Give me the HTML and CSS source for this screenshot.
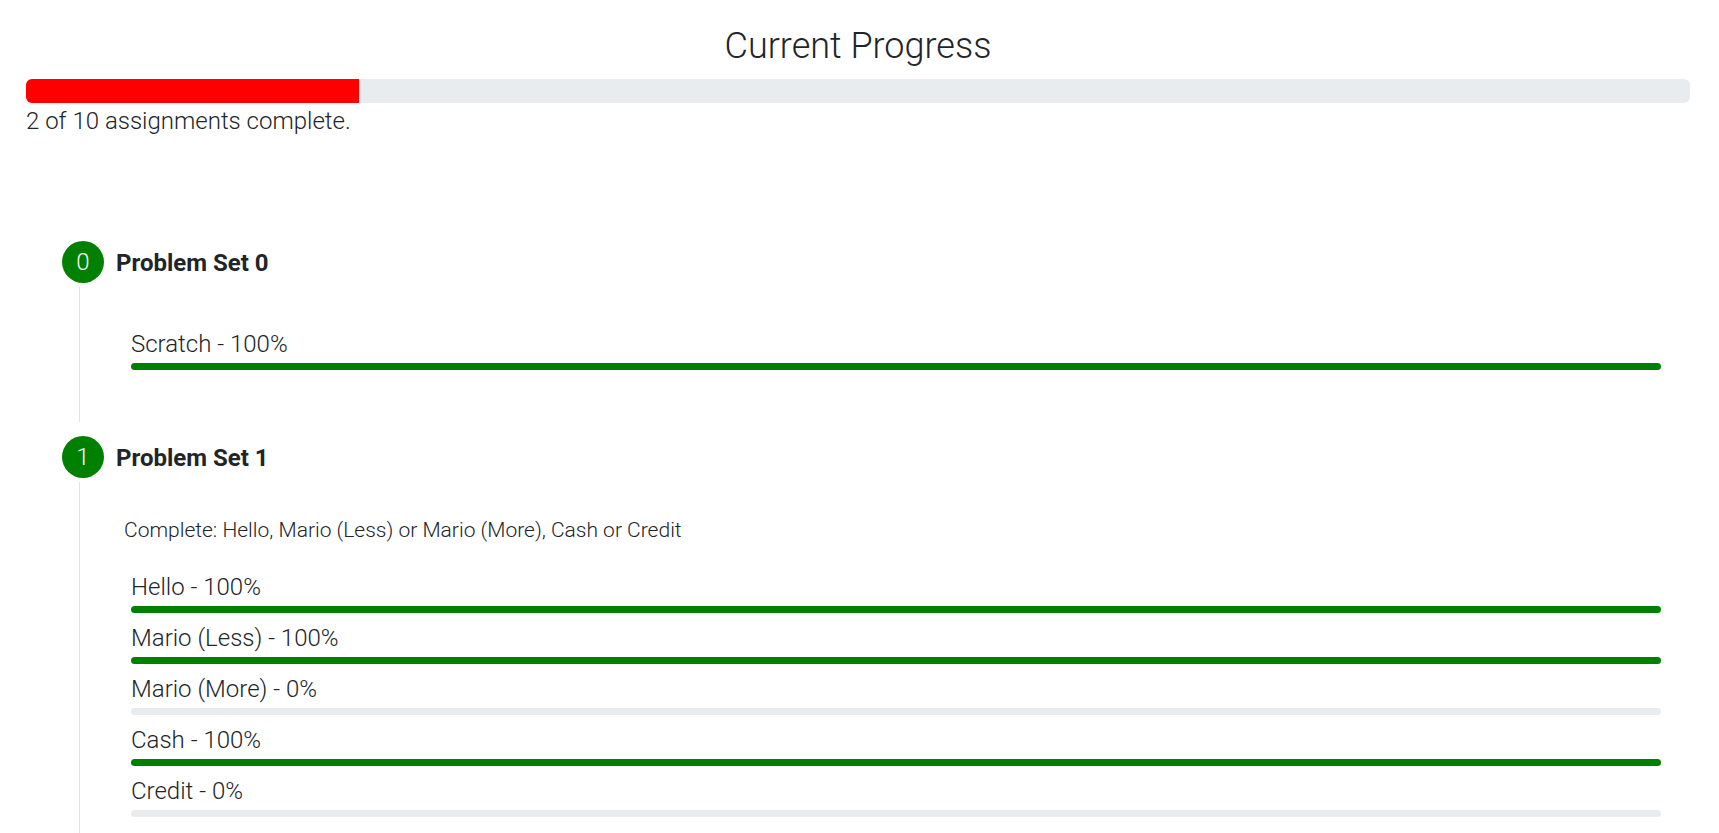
FILE: index.html
```html
<!DOCTYPE html>
<html lang="en">
<head>
<meta charset="utf-8">
<title>Current Progress</title>
<link rel="stylesheet" href="styles.css">
</head>
<body>
<main class="page">
  <h1 class="title">Current Progress</h1>
  <div class="overall">
    <div class="overall-fill" style="width: 20%"></div>
  </div>
  <p class="overall-text">2 of 10 assignments complete.</p>

  <section class="sets">
    <div class="set">
      <div class="set-head">
        <span class="badge">0</span>
        <h2 class="set-title">Problem Set 0</h2>
      </div>
      <div class="set-body">
        <div class="items">
          <div class="item">
            <div class="item-label">Scratch - 100%</div>
            <div class="item-bar"><div class="item-fill" style="width: 100%"></div></div>
          </div>
        </div>
      </div>
    </div>

    <div class="set">
      <div class="set-head">
        <span class="badge">1</span>
        <h2 class="set-title">Problem Set 1</h2>
      </div>
      <div class="set-body">
        <p class="set-note">Complete: Hello, Mario (Less) or Mario (More), Cash or Credit</p>
        <div class="items">
          <div class="item">
            <div class="item-label">Hello - 100%</div>
            <div class="item-bar"><div class="item-fill" style="width: 100%"></div></div>
          </div>
          <div class="item">
            <div class="item-label">Mario (Less) - 100%</div>
            <div class="item-bar"><div class="item-fill" style="width: 100%"></div></div>
          </div>
          <div class="item">
            <div class="item-label">Mario (More) - 0%</div>
            <div class="item-bar"><div class="item-fill" style="width: 0%"></div></div>
          </div>
          <div class="item">
            <div class="item-label">Cash - 100%</div>
            <div class="item-bar"><div class="item-fill" style="width: 100%"></div></div>
          </div>
          <div class="item">
            <div class="item-label">Credit - 0%</div>
            <div class="item-bar"><div class="item-fill" style="width: 0%"></div></div>
          </div>
        </div>
      </div>
    </div>
  </section>
</main>
</body>
</html>
```

FILE: styles.css
```css
html {
  overflow: hidden;
}

body {
  margin: 0;
  background: #ffffff;
  color: #212529;
  font-family: Roboto, "Liberation Sans", sans-serif;
  font-weight: 300;
}

.page {
  padding: 0 29px 0 26px;
}

.title {
  margin: 25px 0 0;
  font-size: 36px;
  line-height: 42px;
  font-weight: 300;
  text-align: center;
}

.overall {
  margin-top: 12px;
  height: 24px;
  background: #e9ecef;
  border-radius: 6px;
  overflow: hidden;
  display: flex;
}

.overall-fill {
  background: #ff0000;
  height: 100%;
}

.overall-text {
  margin: 4px 0 0;
  font-size: 24px;
  line-height: 28px;
}

.sets {
  margin-top: 106px;
  display: flex;
  flex-direction: column;
  gap: 14px;
}

.set-head {
  display: flex;
  align-items: center;
  gap: 12px;
  padding-left: 36px;
  height: 42px;
}

.badge {
  width: 42px;
  height: 42px;
  border-radius: 50%;
  background: #008000;
  color: #ffffff;
  display: flex;
  align-items: center;
  justify-content: center;
  font-size: 24px;
  font-weight: 300;
  flex-shrink: 0;
}

.set-title {
  margin: 2px 0 0;
  font-size: 24px;
  line-height: 28px;
  font-weight: 700;
}

.set-body {
  margin: 4px 0 0 53px;
  border-left: 1px solid #dee2e6;
  padding: 36px 29px 52px 44px;
}

.set-note {
  margin: 0 0 23px;
  font-size: 21px;
  line-height: 25px;
}

.items {
  margin-left: 7px;
  padding-top: 7px;
  display: flex;
  flex-direction: column;
  gap: 11px;
}

.item-label {
  font-size: 24px;
  line-height: 28px;
}

.item-bar {
  margin-top: 5px;
  height: 7px;
  background: #e9ecef;
  border-radius: 4px;
  overflow: hidden;
  display: flex;
}

.item-fill {
  background: #008000;
  height: 100%;
}
```
